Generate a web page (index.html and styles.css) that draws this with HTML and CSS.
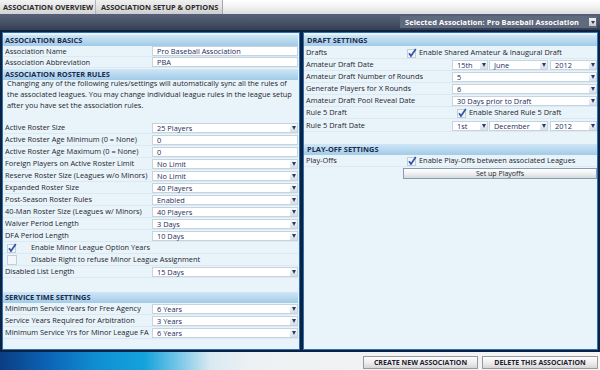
FILE: index.html
```html
<!DOCTYPE html>
<html>
<head>
<meta charset="utf-8">
<link rel="stylesheet" href="styles.css">
</head>
<body>
<div class="app">
  <div class="tabs">
    <div class="tab tab-1">ASSOCIATION OVERVIEW</div>
    <div class="tab tab-2">ASSOCIATION SETUP &amp; OPTIONS</div>
  </div>
  <div class="toolbar">
    <div class="selector"><span class="sel-text">Selected Association: Pro Baseball Association</span><span class="sel-arr"></span></div>
  </div>
  <div class="main">
    <section class="panel panel-left">
      <div class="hdr">ASSOCIATION BASICS</div>
      <div class="row r11"><span class="lab">Association Name</span><span class="fld">Pro Baseball Association</span></div>
      <div class="row r11"><span class="lab">Association Abbreviation</span><span class="fld">PBA</span></div>
      <div class="hdr hdr-2">ASSOCIATION ROSTER RULES</div>
      <p class="note">Changing any of the following rules/settings will automatically sync all the rules of the associated leagues. You may change individual league rules in the league setup after you have set the association rules.</p>
      <div class="rows rows-roster">
        <div class="row"><span class="lab">Active Roster Size</span><span class="fld"><span class="val">25 Players</span><span class="arr"></span></span></div>
        <div class="row"><span class="lab">Active Roster Age Minimum (0 = None)</span><span class="fld">0</span></div>
        <div class="row"><span class="lab">Active Roster Age Maximum (0 = None)</span><span class="fld">0</span></div>
        <div class="row"><span class="lab">Foreign Players on Active Roster Limit</span><span class="fld"><span class="val">No Limit</span><span class="arr"></span></span></div>
        <div class="row"><span class="lab">Reserve Roster Size (Leagues w/o Minors)</span><span class="fld"><span class="val">No Limit</span><span class="arr"></span></span></div>
        <div class="row"><span class="lab">Expanded Roster Size</span><span class="fld"><span class="val">40 Players</span><span class="arr"></span></span></div>
        <div class="row"><span class="lab">Post-Season Roster Rules</span><span class="fld"><span class="val">Enabled</span><span class="arr"></span></span></div>
        <div class="row"><span class="lab">40-Man Roster Size (Leagues w/ Minors)</span><span class="fld"><span class="val">40 Players</span><span class="arr"></span></span></div>
        <div class="row"><span class="lab">Waiver Period Length</span><span class="fld"><span class="val">3 Days</span><span class="arr"></span></span></div>
        <div class="row"><span class="lab">DFA Period Length</span><span class="fld"><span class="val">10 Days</span><span class="arr"></span></span></div>
        <div class="row row-check"><span class="chk chk-wide"><svg width="10" height="10" viewBox="0 0 10 10"><rect x="0.5" y="1.5" width="8" height="8" fill="#f2f7fb" stroke="#c3ced8"/><path d="M2 5.2 L4 8 L8.8 1" fill="none" stroke="#2f55a8" stroke-width="1.7"/></svg></span><span class="chk-text">Enable Minor League Option Years</span></div>
        <div class="row row-check"><span class="chk chk-wide"><svg width="10" height="10" viewBox="0 0 10 10"><rect x="0.5" y="0.5" width="9" height="9" fill="#f2f7fb" stroke="#c3ced8"/></svg></span><span class="chk-text">Disable Right to refuse Minor League Assignment</span></div>
        <div class="row"><span class="lab">Disabled List Length</span><span class="fld"><span class="val">15 Days</span><span class="arr"></span></span></div>
      </div>
      <div class="hdr hdr-service">SERVICE TIME SETTINGS</div>
      <div class="row"><span class="lab">Minimum Service Years for Free Agency</span><span class="fld"><span class="val">6 Years</span><span class="arr"></span></span></div>
      <div class="row"><span class="lab">Service Years Required for Arbitration</span><span class="fld"><span class="val">3 Years</span><span class="arr"></span></span></div>
      <div class="row"><span class="lab">Minimum Service Yrs for Minor League FA</span><span class="fld"><span class="val">6 Years</span><span class="arr"></span></span></div>
    </section>
    <section class="panel panel-right">
      <div class="hdr">DRAFT SETTINGS</div>
      <div class="rows rows-draft">
        <div class="row row-free"><span class="lab lab-short">Drafts</span><span class="chk"><svg width="10" height="10" viewBox="0 0 10 10"><rect x="0.5" y="1.5" width="8" height="8" fill="#f2f7fb" stroke="#c3ced8"/><path d="M2 5.2 L4 8 L8.8 1" fill="none" stroke="#2f55a8" stroke-width="1.7"/></svg></span><span class="chk-text-r">Enable Shared Amateur &amp; Inaugural Draft</span></div>
        <div class="row"><span class="lab">Amateur Draft Date</span>
          <span class="date">
            <span class="fld"><span class="val">15th</span><span class="arr"></span></span>
            <span class="fld"><span class="val">June</span><span class="arr"></span></span>
            <span class="fld"><span class="val">2012</span><span class="arr"></span></span>
          </span>
        </div>
        <div class="row"><span class="lab">Amateur Draft Number of Rounds</span><span class="fld"><span class="val">5</span><span class="arr"></span></span></div>
        <div class="row"><span class="lab">Generate Players for X Rounds</span><span class="fld"><span class="val">6</span><span class="arr"></span></span></div>
        <div class="row"><span class="lab">Amateur Draft Pool Reveal Date</span><span class="fld"><span class="val">30 Days prior to Draft</span><span class="arr"></span></span></div>
        <div class="row"><span class="lab">Rule 5 Draft</span><span class="chk-cell"><span class="chk"><svg width="10" height="10" viewBox="0 0 10 10"><rect x="0.5" y="1.5" width="8" height="8" fill="#f2f7fb" stroke="#c3ced8"/><path d="M2 5.2 L4 8 L8.8 1" fill="none" stroke="#2f55a8" stroke-width="1.7"/></svg></span><span class="chk-text-r">Enable Shared Rule 5 Draft</span></span></div>
        <div class="row row-gap"><span class="lab">Rule 5 Draft Date</span>
          <span class="date">
            <span class="fld"><span class="val">1st</span><span class="arr"></span></span>
            <span class="fld"><span class="val">December</span><span class="arr"></span></span>
            <span class="fld"><span class="val">2012</span><span class="arr"></span></span>
          </span>
        </div>
      </div>
      <div class="hdr hdr-playoff">PLAY-OFF SETTINGS</div>
      <div class="row row-free"><span class="lab lab-short">Play-Offs</span><span class="chk"><svg width="10" height="10" viewBox="0 0 10 10"><rect x="0.5" y="1.5" width="8" height="8" fill="#f2f7fb" stroke="#c3ced8"/><path d="M2 5.2 L4 8 L8.8 1" fill="none" stroke="#2f55a8" stroke-width="1.7"/></svg></span><span class="chk-text-r">Enable Play-Offs between associated Leagues</span></div>
      <div class="btn-row"><span class="setup-btn">Set up Playoffs</span></div>
    </section>
  </div>
  <div class="footer">
    <span class="btn btn-create">CREATE NEW ASSOCIATION</span>
    <span class="btn btn-delete">DELETE THIS ASSOCIATION</span>
  </div>
</div>
</body>
</html>
```
FILE: styles.css
```css
* { box-sizing: border-box; margin: 0; padding: 0; }
body {
  margin: 0;
  width: 600px;
  height: 370px;
  overflow: hidden;
  font-family: "Open Sans", "Noto Sans", sans-serif;
  font-size: 7.4px;
  line-height: 11px;
  color: #1d1f2c;
  background: #0c2442;
}
.app { width: 600px; height: 370px; display: flex; flex-direction: column; }

/* tabs */
.tabs {
  height: 14px;
  display: flex;
  background: linear-gradient(#ffffff, #f2f2f2 50%, #dedede);
}
.tab {
  font-weight: 700;
  font-size: 7.4px;
  line-height: 14px;
  color: #2b2b2b;
  white-space: nowrap;
}
.tab-1 {
  width: 96px;
  padding-left: 3px;
  background: linear-gradient(#f3f3f3, #e4e4e4 50%, #d3d3d3);
  border-right: 1px solid #b5b5b5;
}
.tab-2 {
  width: 127px;
  padding-left: 5px;
  background: linear-gradient(#f0f0f0, #e2e2e2 50%, #cdcdcd);
  border-right: 1px solid #a8a8a8;
}

/* toolbar */
.toolbar {
  height: 16px;
  display: flex;
  justify-content: flex-end;
  align-items: center;
  padding-right: 3px;
  background: linear-gradient(#56607a, #4a5468 50%, #353e50);
}
.selector {
  width: 197px;
  height: 12px;
  display: flex;
  align-items: center;
  background: #5f6a7e;
  padding-left: 5px;
  padding-right: 1px;
}
.sel-text {
  flex: 1;
  color: #ffffff;
  font-weight: 700;
  font-size: 7.4px;
  letter-spacing: 0.1px;
  white-space: nowrap;
}
.sel-arr {
  width: 7px;
  height: 8px;
  background: linear-gradient(#f2f2f2, #c4c8ce);
  display: flex;
  align-items: center;
  justify-content: center;
}
.sel-arr::after {
  content: "";
  border-left: 2px solid transparent;
  border-right: 2px solid transparent;
  border-top: 3px solid #303a50;
}

/* main */
.main {
  height: 322px;
  display: flex;
  gap: 3px;
  padding: 2px;
  background: #0b2341;
}
.panel {
  height: 318px;
  background: #e9f3fa;
  border: 1px solid #2c6fb6;
  padding-top: 2px;
  display: flex;
  flex-direction: column;
}
.panel-left { width: 298px; --lab: 149px; padding-right: 1px; }
.panel-right { width: 295px; --lab: 148px; }

.hdr {
  height: 11px;
  line-height: 11px;
  padding-left: 2px;
  font-weight: 700;
  font-size: 7.4px;
  color: #1b2c4e;
  background: linear-gradient(#cfe6f5, #b3d6ed 60%, #a2cbe7);
  white-space: nowrap;
}
.panel-right .hdr { padding-left: 3px; }
.hdr-2 { margin-top: 1px; }
.hdr-service { margin-top: 14px; }
.hdr-playoff { margin-top: 12px; }

.note {
  margin-top: -2px;
  padding: 0 3px 0 4px;
  line-height: 10.8px;
  color: #1d1f2c;
}

.rows { display: flex; flex-direction: column; }
.rows-roster { margin-top: 12px; }
.rows-draft { margin-top: 1px; }

.row {
  height: 12px;
  display: grid;
  grid-template-columns: var(--lab) 1fr;
  align-items: center;
  border-bottom: 1px solid #dce9f2;
}
.r11 { height: 11px; }
.row-gap { margin-top: 1px; }
.lab {
  padding-left: 2px;
  white-space: nowrap;
  overflow: hidden;
  line-height: 11px;
}
.fld {
  height: 10px;
  display: flex;
  align-items: center;
  background: #ffffff;
  border: 1px solid #c6d4df;
  padding-left: 4px;
  color: #262b5e;
  line-height: 8px;
  white-space: nowrap;
}
.val { flex: 1; }
.arr {
  width: 7px;
  height: 8px;
  margin-right: 0;
  background: linear-gradient(#fbfcfd, #d6dde4);
  display: flex;
  align-items: center;
  justify-content: center;
}
.arr::after {
  content: "";
  border-left: 2.5px solid transparent;
  border-right: 2.5px solid transparent;
  border-top: 4px solid #2a3c6e;
}

.date {
  display: grid;
  grid-template-columns: 36px 60px 1fr;
  gap: 1px;
}
.date .fld:nth-child(2) { margin-right: 1px; }

.row-check {
  display: flex;
  align-items: center;
  padding-left: 4px;
}
.chk { display: flex; width: 10px; height: 10px; }
.chk-wide { margin-right: 14px; }
.chk-text { white-space: nowrap; }

.row-free {
  display: flex;
  align-items: center;
}
.lab-short { width: 103px; }
.chk-cell { display: flex; align-items: center; padding-left: 5px; }
.chk-text-r { margin-left: 2px; white-space: nowrap; }

.btn-row { height: 12px; display: flex; padding-left: 99px; padding-top: 1px; }
.setup-btn {
  flex: 1;
  height: 11px;
  line-height: 9px;
  text-align: center;
  font-size: 7px;
  color: #1d1f2c;
  background: linear-gradient(#ffffff, #eef0f2 50%, #d5dadf);
  border: 1px solid #8c9cab;
}

/* footer */
.footer {
  height: 18px;
  display: flex;
  justify-content: flex-end;
  gap: 4px;
  padding: 4px 2px 1px 0;
  background: linear-gradient(to right, #0b3d82 0%, #0c64b6 8%, #0f8ed2 16%, #14a2dc 24%, #7cc8e8 30%, #d9e9f1 35%, #eef1f3 42%, #f5f5f5 100%);
}
.btn {
  height: 13px;
  line-height: 11px;
  text-align: center;
  font-weight: 700;
  font-size: 7px;
  color: #1e2030;
  background: linear-gradient(#fdfdfd, #eeeeee 50%, #d6d6d6);
  border: 1px solid #9a9a9a;
  white-space: nowrap;
}
.btn-create { width: 115px; }
.btn-delete { width: 116px; }
```
